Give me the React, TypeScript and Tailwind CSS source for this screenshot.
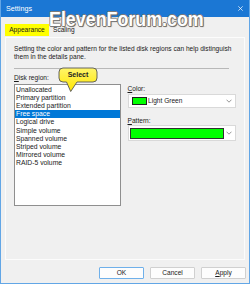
const regions = [
  "Unallocated",
  "Primary partition",
  "Extended partition",
  "Free space",
  "Logical drive",
  "Simple volume",
  "Spanned volume",
  "Striped volume",
  "Mirrored volume",
  "RAID-5 volume",
];

function Chevron() {
  return (
    <svg width="6" height="4" viewBox="0 0 6 4" className="shrink-0">
      <path d="M0.5 0.7 L3 3.2 L5.5 0.7" fill="none" stroke="#7a7a7a" strokeWidth="0.8" />
    </svg>
  );
}

export default function App() {
  return (
    <div className="relative w-[250px] h-[285px] bg-white overflow-hidden font-['Liberation_Sans',Arial,sans-serif] text-[#1a1a1a]">
      {/* Dialog window */}
      <div className="flex flex-col h-[284px] bg-[#f0f0f0] border-x border-b border-[#62a6e6]">
        {/* Title bar */}
        <div className="h-[17px] bg-[#1b77d4] flex items-center justify-between pl-[5px] pr-[6px] text-white">
          <span className="text-[7.2px] leading-none">Settings</span>
          <svg width="5" height="5" viewBox="0 0 5 5">
            <path d="M0.3 0.3 L4.7 4.7 M4.7 0.3 L0.3 4.7" stroke="#ffffff" strokeWidth="0.7" />
          </svg>
        </div>

        {/* Tabs */}
        <div className="mt-[7px] h-[12px] pl-[4px] flex items-center text-[6.6px]">
          <div className="w-[44px] h-[12px] bg-[#ffff00] flex items-center justify-center">Appearance</div>
          <div className="ml-[4px]">Scaling</div>
        </div>

        {/* Tab page */}
        <div className="mt-[1px] mx-[4px] h-[223px] border border-[#fcfcfc] px-[8px] pt-[7px]">
          <p className="text-[6.6px] leading-[8.3px] whitespace-nowrap">
            Setting the color and pattern for the listed disk regions can help distinguish
            <br />
            them in the details pane.
          </p>
          <div className="mt-[6px] h-[1px] w-[215px] bg-[#b8b8b8]" />

          <div className="mt-[5px] flex">
            {/* Disk region list */}
            <div className="w-[107px]">
              <div className="h-[8px] leading-[8px] text-[6.6px]">
                <span className="underline decoration-[0.5px] underline-offset-[1px]">D</span>isk region:
              </div>
              <div className="mt-[2px] h-[122px] border border-[#8f8f8f] bg-white pt-[1px] text-[6.8px]">
                {regions.map((r) => (
                  <div
                    key={r}
                    className={
                      r === "Free space"
                        ? "h-[8.2px] leading-[8.2px] pl-[1px] bg-[#0078d7] text-white"
                        : "h-[8.2px] leading-[8.2px] pl-[1px]"
                    }
                  >
                    {r}
                  </div>
                ))}
              </div>
            </div>

            {/* Color / pattern */}
            <div className="ml-[7px] w-[109px] pt-[11.5px] text-[6.6px]">
              <div className="h-[8px] leading-[8px]">
                <span className="underline decoration-[0.5px] underline-offset-[1px]">C</span>olor:
              </div>
              <div className="mt-[1px] h-[14px] border border-[#d9d9d9] bg-white flex items-center pl-[3px] pr-[3.5px]">
                <div className="w-[15px] h-[8px] bg-[#00ff00] border border-[#202020]" />
                <span className="ml-[1.5px]">Light Green</span>
                <div className="ml-auto">
                  <Chevron />
                </div>
              </div>
              <div className="mt-[8.5px] h-[8px] leading-[8px]">
                <span className="underline decoration-[0.5px] underline-offset-[1px]">P</span>attern:
              </div>
              <div className="mt-[0.5px] h-[16px] border border-[#d9d9d9] bg-white flex items-center pl-[1px] pr-[3.5px]">
                <div className="w-[94px] h-[11px] bg-[#00ff00] border border-[#303030]" />
                <div className="ml-auto">
                  <Chevron />
                </div>
              </div>
            </div>
          </div>
        </div>

        {/* Buttons */}
        <div className="mt-[7px] flex justify-end gap-[6px] pr-[3px] text-[6.6px]">
          <button className="w-[45px] h-[12px] border border-[#6fb0ea] bg-[#fdfdfd] rounded-[1px]">OK</button>
          <button className="w-[45px] h-[12px] border border-[#d0d0d0] bg-[#fdfdfd] rounded-[1px]">Cancel</button>
          <button className="w-[45px] h-[12px] border border-[#d0d0d0] bg-[#fdfdfd] rounded-[1px]">
            <span className="underline decoration-[0.5px] underline-offset-[1px]">A</span>pply
          </button>
        </div>
      </div>

      {/* Watermark */}
      <div className="absolute left-[49px] top-[8px] text-[21px] leading-none font-bold text-white whitespace-nowrap origin-left scale-x-[0.85] [text-shadow:1px_0_0_#7a7a7a,-1px_0_0_#7a7a7a,0_1px_0_#7a7a7a,0_-1px_0_#7a7a7a,1px_1px_1px_#555]">
        ElevenForum.com
      </div>

      {/* Select callout */}
      <svg className="absolute left-[58px] top-[67px]" width="41" height="26" viewBox="0 0 41 26">
        <defs>
          <linearGradient id="cy" x1="0" y1="0" x2="0" y2="1">
            <stop offset="0" stopColor="#fff56a" />
            <stop offset="1" stopColor="#ffe600" />
          </linearGradient>
        </defs>
        <path
          d="M5 1 H35 Q39 1 39 5 V11 Q39 15 35 15 H19 L12.7 24.5 L8.5 15 H5 Q1 15 1 11 V5 Q1 1 5 1 Z"
          fill="url(#cy)"
          stroke="#555555"
          strokeWidth="0.9"
        />
      </svg>
      <div className="absolute left-[59px] top-[68px] w-[38px] h-[14px] flex items-center justify-center text-[7px] font-bold text-[#222]">
        Select
      </div>
    </div>
  );
}
